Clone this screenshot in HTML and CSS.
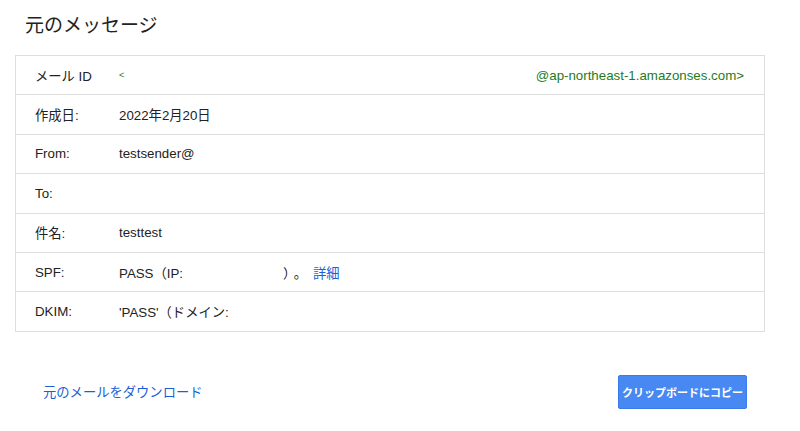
FILE: index.html
```html
<!DOCTYPE html>
<html lang="ja">
<head>
    <meta charset="UTF-8">
    <meta name="viewport" content="width=device-width, initial-scale=1.0">
    <title>元のメッセージ</title>
    <link rel="stylesheet" href="styles.css">
</head>
<body>
    <div class="page">
        <h1 class="title">元のメッセージ</h1>

        <div class="details">
            <div class="row">
                <div class="label">メール ID</div>
                <div class="value id-value">
                    <span class="green small">&lt;</span>
                    <span class="green">@ap-northeast-1.amazonses.com&gt;</span>
                </div>
            </div>
            <div class="row">
                <div class="label">作成日:</div>
                <div class="value">2022年2月20日</div>
            </div>
            <div class="row">
                <div class="label">From:</div>
                <div class="value">testsender@</div>
            </div>
            <div class="row">
                <div class="label">To:</div>
                <div class="value"></div>
            </div>
            <div class="row">
                <div class="label">件名:</div>
                <div class="value">testtest</div>
            </div>
            <div class="row">
                <div class="label">SPF:</div>
                <div class="value">PASS（IP:<span class="blank"></span>）<span class="dot">。</span><a href="#" class="link">詳細</a></div>
            </div>
            <div class="row">
                <div class="label">DKIM:</div>
                <div class="value">'PASS'（ドメイン:</div>
            </div>
        </div>

        <div class="actions">
            <a href="#" class="link download">元のメールをダウンロード</a>
            <button class="copy-button">クリップボードにコピー</button>
        </div>
    </div>
</body>
</html>
```

FILE: styles.css
```css
body {
    margin: 0;
    padding: 0;
    font-family: 'Liberation Sans', 'Noto Sans CJK JP', sans-serif;
    color: #222;
    background: #ffffff;
}
.page {
    padding: 0 35px 0 15px;
}
.title {
    margin: 0;
    padding: 10px 0 0 10px;
    height: 55px;
    box-sizing: border-box;
    font-size: 19px;
    font-weight: normal;
    color: #222;
}
.details {
    width: 750px;
    border: 1px solid #dedede;
    border-bottom: none;
    box-sizing: border-box;
}
.row {
    display: flex;
    align-items: center;
    height: 39.4px;
    box-sizing: border-box;
    border-bottom: 1px solid #dedede;
    padding: 0 20px 0 19px;
    font-size: 13.3px;
}
.label {
    width: 84px;
    flex-shrink: 0;
}
.value {
    flex: 1;
}
.id-value {
    display: flex;
    justify-content: space-between;
    align-items: center;
}
.green {
    color: #1e7b1e;
}
.small {
    font-size: 9px;
}
.blank {
    display: inline-block;
    width: 100px;
}
.dot {
    margin-left: 4px;
    margin-right: 6px;
}
.link {
    color: #1a5fd6;
    text-decoration: none;
}
.actions {
    display: flex;
    justify-content: space-between;
    align-items: center;
    margin-top: 43px;
    padding: 0 18px 0 28px;
}
.download {
    font-size: 13.3px;
}
.copy-button {
    width: 129px;
    height: 34px;
    border: 1px solid #3b7be8;
    border-radius: 2px;
    background-color: #4788f2;
    color: #ffffff;
    font-family: 'Liberation Sans', 'Noto Sans CJK JP', sans-serif;
    font-size: 11px;
    font-weight: bold;
    padding: 0;
    cursor: pointer;
}
```
